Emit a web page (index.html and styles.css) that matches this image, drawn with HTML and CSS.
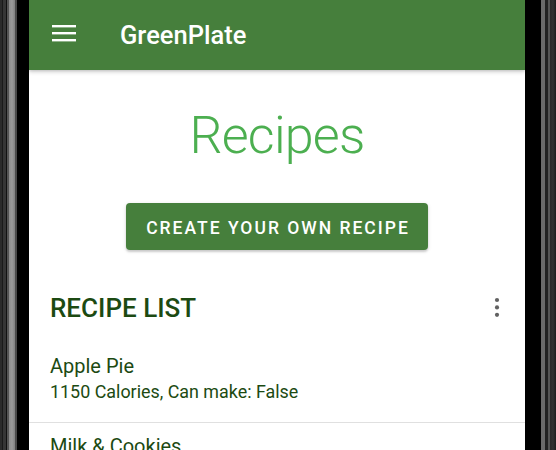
FILE: index.html
```html
<!DOCTYPE html>
<html>
<head>
<meta charset="utf-8">
<link rel="stylesheet" href="styles.css">
</head>
<body>
<div class="device">
  <div class="bezel bezel-left"></div>
  <div class="screen">
    <header class="appbar">
      <svg class="menu-icon" width="24" height="18" viewBox="0 0 24 18">
        <rect x="0" y="0" width="24" height="2.4" fill="#fff"/>
        <rect x="0" y="7" width="24" height="2.4" fill="#fff"/>
        <rect x="0" y="14" width="24" height="2.4" fill="#fff"/>
      </svg>
      <span class="app-title">GreenPlate</span>
    </header>
    <main class="content">
      <h1 class="page-title">Recipes</h1>
      <div class="action-row">
        <button class="btn-primary">Create your own recipe</button>
      </div>
      <section class="recipe-section">
        <div class="section-header">
          <h2 class="section-title">RECIPE LIST</h2>
          <svg class="more-icon" width="24" height="24" viewBox="0 0 24 24">
            <circle cx="12" cy="5" r="2.1" fill="#616161"/>
            <circle cx="12" cy="12.4" r="2.1" fill="#616161"/>
            <circle cx="12" cy="19.8" r="2.1" fill="#616161"/>
          </svg>
        </div>
        <ul class="recipe-list">
          <li class="recipe-item">
            <div class="recipe-name">Apple Pie</div>
            <div class="recipe-meta">1150 Calories, Can make: False</div>
          </li>
          <li class="recipe-item">
            <div class="recipe-name">Milk &amp; Cookies</div>
            <div class="recipe-meta">300 Calories, Can make: True</div>
          </li>
        </ul>
      </section>
    </main>
  </div>
  <div class="bezel bezel-right"></div>
</div>
</body>
</html>
```
FILE: styles.css
```css
* { box-sizing: border-box; }
html, body {
  margin: 0;
  padding: 0;
  height: 100%;
  overflow: hidden;
  background: #000;
  font-family: Roboto, "Liberation Sans", sans-serif;
}
.device {
  display: flex;
  height: 450px;
  width: 556px;
}
.bezel { flex: none; height: 100%; }
.bezel-left {
  width: 29px;
  background: linear-gradient(to right,
    #2b2b2b 0px, #2b2b2b 2px,
    #1a1a1a 2px, #1a1a1a 3px,
    #363636 3px, #363636 6px,
    #111 6px, #111 7px,
    #555 7px, #555 9px,
    #8c8c8c 9px, #9a9a9a 12px, #808080 15px,
    #4a4a4a 15px, #4a4a4a 17px,
    #000 17px, #000 29px);
}
.bezel-right {
  width: 31px;
  background: linear-gradient(to right,
    #000 0px, #000 16px,
    #6a6a6a 16px, #6a6a6a 20px,
    #222 20px, #222 23px,
    #555 23px, #555 25px,
    #2a2a2a 25px, #333 28px, #1e1e1e 31px);
}
.screen {
  flex: none;
  width: 496px;
  height: 100%;
  background: #fff;
  display: flex;
  flex-direction: column;
  overflow: hidden;
}
.appbar {
  flex: none;
  height: 70px;
  background: #467f3c;
  display: flex;
  align-items: center;
  padding-left: 23px;
  box-shadow: 0 2px 4px rgba(0,0,0,0.18), 0 1px 2px rgba(0,0,0,0.08);
  position: relative;
  z-index: 1;
}
.menu-icon { display: block; margin-top: -2px; }
.app-title {
  margin-left: 44px;
  color: #fff;
  font-size: 25.5px;
  font-weight: 500;
  line-height: 30px;
  margin-top: -1px;
}
.content {
  flex: 1;
  display: flex;
  flex-direction: column;
}
.page-title {
  margin: 34px 0 0;
  text-align: center;
  font-size: 52px;
  font-weight: 300;
  letter-spacing: -0.8px;
  line-height: 64px;
  color: #4caf50;
}
.action-row {
  display: flex;
  justify-content: center;
  margin-top: 35px;
}
.btn-primary {
  border: none;
  border-radius: 4px;
  background: #467f3c;
  color: #fff;
  font-family: Roboto, "Liberation Sans", sans-serif;
  font-size: 17.5px;
  font-weight: 500;
  letter-spacing: 2px;
  text-transform: uppercase;
  line-height: 20px;
  padding: 15px 0 12px 2px;
  width: 302px;
  box-shadow: 0 2px 2px rgba(0,0,0,0.14), 0 1px 4px rgba(0,0,0,0.12);
}
.recipe-section { margin-top: 42px; }
.section-header {
  display: flex;
  align-items: center;
  justify-content: space-between;
  padding: 0 16px 0 21px;
}
.section-title {
  margin: 0;
  font-size: 26px;
  font-weight: 500;
  line-height: 32px;
  color: #1c4a12;
}
.more-icon { display: block; margin-top: -3px; }
.recipe-list {
  list-style: none;
  margin: 19px 0 0;
  padding: 0;
}
.recipe-item {
  padding: 11px 21px 18px;
  border-bottom: 1px solid #e0e0e0;
  color: #1c4a12;
}
.recipe-name {
  font-size: 20px;
  line-height: 25px;
}
.recipe-meta {
  font-size: 17.9px;
  line-height: 25px;
}
```
